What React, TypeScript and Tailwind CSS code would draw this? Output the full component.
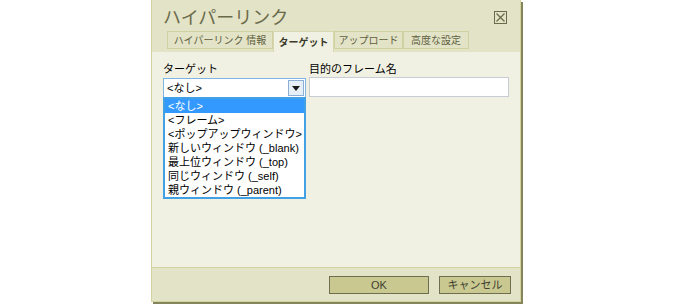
const options = [
  '<なし>',
  '<フレーム>',
  '<ポップアップウィンドウ>',
  '新しいウィンドウ (_blank)',
  '最上位ウィンドウ (_top)',
  '同じウィンドウ (_self)',
  '親ウィンドウ (_parent)',
]

const tabs = [
  { label: 'ハイパーリンク 情報', w: 'w-[106px]' },
  { label: 'ターゲット', w: 'w-[61px]' },
  { label: 'アップロード', w: 'w-[69px]' },
  { label: '高度な設定', w: 'w-[66px]' },
]

export default function App() {
  return (
    <div
      className="w-[675px] h-[304px] bg-white overflow-hidden"
      style={{ fontFamily: '"Liberation Sans", "Noto Sans CJK JP", sans-serif' }}
    >
      <div className="ml-[151px] w-[370px] h-[302px] flex flex-col bg-[#e3e3c7] border-x border-b border-[#d3d3a0] shadow-[2px_2px_0_#85855c]">
        {/* title */}
        <div className="h-[31px] flex items-center justify-between pl-[11px] pr-[13px]">
          <span className="text-[18px] leading-none text-[#6a6a4a] pt-[5px]">ハイパーリンク</span>
          <span className="w-[13px] h-[13px] mt-[4px] border border-[#6b6b4b] flex items-center justify-center">
            <svg width="11" height="11" viewBox="0 0 11 11">
              <path d="M1.5 1.5l8 8M9.5 1.5l-8 8" stroke="#6b6b4b" strokeWidth="1.3" />
            </svg>
          </span>
        </div>

        {/* tabs */}
        <div className="flex items-start pl-[15px] h-[21px]">
          {tabs.map((t, i) =>
            i === 1 ? (
              <div
                key={t.label}
                className={`${t.w} h-[21px] flex justify-center pt-[3px] bg-[#f1f1e3] border-x border-t border-[#d8d8b0] text-[10px] font-bold text-[#3a3a2a] whitespace-nowrap`}
              >
                {t.label}
              </div>
            ) : (
              <div
                key={t.label}
                className={`${t.w} h-[18px] flex items-center justify-center border border-[#d0d0a0] text-[10px] text-[#5e5e40] whitespace-nowrap`}
              >
                {t.label}
              </div>
            ),
          )}
        </div>

        {/* content */}
        <div className="relative flex-1 bg-[#f1f1e3] px-[11px] pt-[10px] border-b border-[#d3d3a0]">
          <div className="flex gap-[3px]">
            <div className="w-[143px]">
              <div className="text-[11px] leading-[14px] text-black mb-[2px]">ターゲット</div>
              <div className="h-[20px] flex items-center justify-between border border-[#7db6e6] bg-white pl-[3px] pr-[1px]">
                <span className="text-[11px] text-black">&lt;なし&gt;</span>
                <span className="w-[16px] h-[16px] flex items-center justify-center border border-[#8ab0d8] bg-[#e6eef8]">
                  <svg width="8" height="5" viewBox="0 0 8 5">
                    <path d="M0 0h8L4 5z" fill="#1a1a1a" />
                  </svg>
                </span>
              </div>
            </div>
            <div className="flex-1">
              <div className="text-[11px] leading-[14px] text-black mb-[1px]">目的のフレーム名</div>
              <div className="h-[20px] bg-white border border-[#c8ccd4]" />
            </div>
          </div>

          {/* open dropdown list */}
          <div className="absolute left-[11px] top-[45px] w-[143px] border-2 border-[#42a0e4] bg-white">
            {options.map((o, i) => (
              <div
                key={o}
                className={`h-[14px] pl-[3px] text-[11px] leading-[14px] whitespace-nowrap ${
                  i === 0 ? 'bg-[#3399ff] text-white' : 'text-black'
                }`}
              >
                {o}
              </div>
            ))}
          </div>
        </div>

        {/* footer */}
        <div className="h-[33px] flex items-start justify-end gap-[10px] pr-[9px] pt-[8px]">
          <button className="w-[100px] h-[18px] bg-[#c8c890] border border-[#6e6e50] text-[11px] text-[#404030] leading-none">
            OK
          </button>
          <button className="w-[72px] h-[18px] bg-[#c8c890] border border-[#6e6e50] text-[11px] text-[#404030] leading-none">
            キャンセル
          </button>
        </div>
      </div>
    </div>
  )
}
